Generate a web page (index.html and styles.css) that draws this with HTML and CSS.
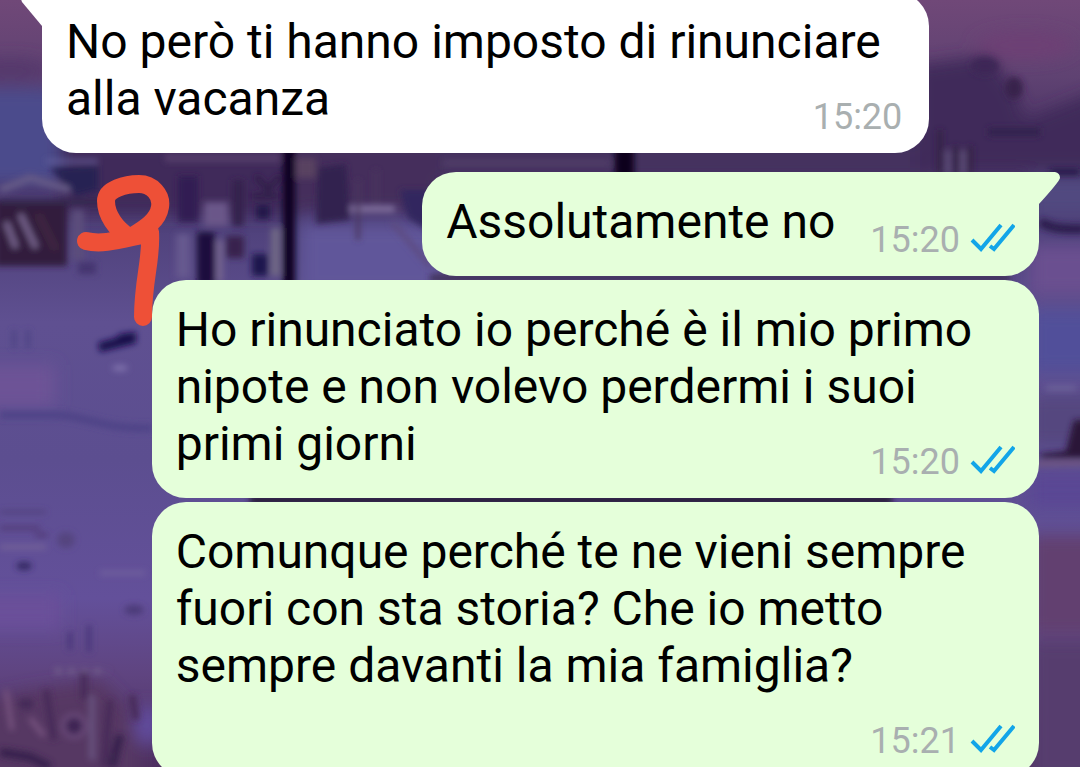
FILE: index.html
```html
<!DOCTYPE html>
<html lang="it">
<head>
<meta charset="utf-8">
<meta name="viewport" content="width=device-width, initial-scale=1">
<title>Chat</title>
<link rel="stylesheet" href="styles.css">
</head>
<body>
<svg class="wallpaper" viewBox="0 0 1080 767" preserveAspectRatio="xMidYMid slice" aria-hidden="true">
  <defs>
    <linearGradient id="sky" x1="0" y1="0" x2="0" y2="1">
      <stop offset="0" stop-color="#704878"/>
      <stop offset="0.1" stop-color="#5f4272"/>
      <stop offset="0.2" stop-color="#463062"/>
      <stop offset="0.3" stop-color="#50427c"/>
      <stop offset="0.42" stop-color="#5f5091"/>
      <stop offset="0.6" stop-color="#5c4e90"/>
      <stop offset="0.78" stop-color="#63509a"/>
      <stop offset="0.88" stop-color="#5f4480"/>
      <stop offset="1" stop-color="#4d3060"/>
    </linearGradient>
    <filter id="soft" x="-20%" y="-20%" width="140%" height="140%"><feGaussianBlur stdDeviation="8"/></filter>
    <filter id="edge" x="-20%" y="-20%" width="140%" height="140%"><feGaussianBlur stdDeviation="3"/></filter>
  </defs>
  <rect width="1080" height="767" fill="url(#sky)"/>
  <g filter="url(#soft)">
    <rect x="-20" y="88" width="80" height="96" fill="#4b4b8c"/>
    <ellipse cx="10" cy="70" rx="40" ry="12" fill="#54386c"/>
    <rect x="60" y="140" width="240" height="75" fill="#3f2b5a"/>
    <rect x="290" y="140" width="150" height="70" fill="#452f5c"/>
    <rect x="300" y="224" width="140" height="70" fill="#61579a"/>
    <rect x="440" y="140" width="500" height="40" fill="#44305f"/>
    <path d="M915 65 L990 55 L1015 90 L1025 120 L1100 90 V170 H915Z" fill="#412c5a"/>
    <ellipse cx="1025" cy="45" rx="50" ry="14" fill="#6d4074"/>
    <rect x="1030" y="176" width="70" height="40" fill="#514a80"/>
    <rect x="1030" y="245" width="70" height="50" fill="#6a5090"/>
    <rect x="1030" y="310" width="70" height="62" fill="#51509a"/>
    <rect x="1030" y="395" width="70" height="50" fill="#55477f"/>
    <rect x="1030" y="473" width="70" height="34" fill="#5a4794"/>
    <rect x="1030" y="535" width="70" height="100" fill="#62406f"/>
    <rect x="1030" y="640" width="70" height="140" fill="#563c6e"/>
    <rect x="-20" y="365" width="75" height="42" fill="#6d5296"/>
    <rect x="-20" y="595" width="80" height="34" fill="#6b509a"/>
    <path d="M-20 700 L30 690 L100 680 L140 720 V790 H-20Z" fill="#573764"/>
    <ellipse cx="148" cy="725" rx="14" ry="20" fill="#604b9c"/>
  </g>
  <g filter="url(#edge)">
    <path d="M50 168 L98 166 V190 L76 196 L56 174Z" fill="#252052"/>
    <path d="M46 161H98" stroke="#6764a0" stroke-width="3"/>
    <path d="M0 190 L30 178 L70 190" stroke="#665b87" stroke-width="7" fill="none"/>
    <rect x="-5" y="201" width="72" height="65" fill="#301d3e"/>
    <path d="M0 202H110" stroke="#32264c" stroke-width="5"/>
    <path d="M6 222 L16 248 M20 214 L36 248" stroke="#75628b" stroke-width="6"/>
    <path d="M38 214 L56 250" stroke="#412640" stroke-width="7"/>
    <rect x="72" y="210" width="12" height="50" fill="#5c4e7b"/>
    <rect x="78" y="262" width="18" height="12" fill="#453670"/>
    <path d="M165 158H280" stroke="#553d6b" stroke-width="8"/>
    <rect x="178" y="176" width="20" height="46" fill="#301d52"/>
    <rect x="204" y="202" width="24" height="24" fill="#6a5789"/>
    <rect x="232" y="180" width="12" height="46" fill="#35214e"/>
    <rect x="256" y="205" width="14" height="14" fill="#24134a"/>
    <path d="M256 176l12 14 12-14M252 196h26" stroke="#2f1d46" stroke-width="5" fill="none"/>
    <rect x="197" y="232" width="18" height="54" fill="#1a0b3e"/>
    <rect x="216" y="240" width="7" height="42" fill="#75658f"/>
    <rect x="226" y="236" width="18" height="22" fill="#38234e"/>
    <rect x="252" y="254" width="16" height="22" fill="#1d174e"/>
    <rect x="271" y="228" width="9" height="48" fill="#6f6884"/>
    <rect x="176" y="234" width="14" height="44" fill="#66598f"/>
    <rect x="283" y="140" width="12" height="150" fill="#0d0524"/>
    <rect x="296" y="158" width="20" height="20" fill="#594360"/>
    <path d="M318 168 L346 164 L350 220 L316 224Z" fill="#33204f"/>
    <path d="M350 209H395" stroke="#80709d" stroke-width="7"/>
    <path d="M358 180V240 M376 170V204" stroke="#49345f" stroke-width="4"/>
    <path d="M400 190 L430 190 V232 L408 218Z" fill="#33285e"/>
    <path d="M392 222 L430 266" stroke="#5d4b80" stroke-width="5"/>
    <rect x="615" y="140" width="19" height="40" fill="#0d031b"/>
    <path d="M443 163H610" stroke="#53406b" stroke-width="5"/>
    <path d="M940 130V174 M956 146V174 M970 146V174" stroke="#302143" stroke-width="5"/>
    <path d="M963 150V174 M948 150V174" stroke="#665a82" stroke-width="4"/>
    <ellipse cx="985" cy="66" rx="14" ry="9" fill="#3c2856"/>
    <ellipse cx="1014" cy="88" rx="9" ry="11" fill="#39214b"/>
    <path d="M988 132H1040" stroke="#33204e" stroke-width="8"/>
    <path d="M1050 172H1080" stroke="#221945" stroke-width="6"/>
    <path d="M1040 222 C1055 230 1065 229 1085 229" stroke="#2b1d4b" stroke-width="9" fill="none"/>
    <path d="M1046 388H1076" stroke="#71679d" stroke-width="4"/>
    <path d="M1040 454 L1066 451 L1074 420 H1090 V458 H1040Z" fill="#2b1238"/>
    <path d="M1036 464 L1085 463" stroke="#72567e" stroke-width="5"/>
    <path d="M430 278H1010" stroke="#3b2a50" stroke-width="6"/>
    <path d="M250 500H892" stroke="#1c1124" stroke-width="7"/>
    <path d="M98 343 L116 338 L120 334 L136 332 V343 L120 347 L100 352Z" fill="#150a4a"/>
    <ellipse cx="120" cy="368" rx="8" ry="3" fill="#8173ad"/>
    <path d="M14 330V348 M28 330V348" stroke="#4c4383" stroke-width="4"/>
    <path d="M0 415 H60 C90 418 110 430 152 428" stroke="#4d4386" stroke-width="7" fill="none"/>
    <path d="M0 512H46" stroke="#4e3f78" stroke-width="3"/>
    <path d="M0 547H46" stroke="#776598" stroke-width="4"/>
    <path d="M35 535H48 M0 528H40" stroke="#513975" stroke-width="4"/>
    <ellipse cx="24" cy="566" rx="8" ry="4" fill="#302561"/>
    <ellipse cx="66" cy="540" rx="9" ry="8" fill="#54457f"/>
    <ellipse cx="134" cy="610" rx="10" ry="5" fill="#4b3b78"/>
    <path d="M100 573H145" stroke="#72629e" stroke-width="4"/>
    <path d="M89 625V652 M70 632V650" stroke="#49377b" stroke-width="5"/>
    <path d="M55 671H108" stroke="#75628c" stroke-width="5" stroke-dasharray="7 6"/>
    <path d="M46 690 L54 740 M84 672V700 M110 700 L104 767 M132 695L136 720" stroke="#472a58" stroke-width="7"/>
    <path d="M92 695V760" stroke="#68537f" stroke-width="6"/>
    <ellipse cx="26" cy="704" rx="8" ry="6" fill="#452958"/>
    <circle cx="74" cy="726" r="11" fill="#412555" stroke="#6c4c7c" stroke-width="4"/>
    <path d="M0 752 L30 757 L50 767 M120 735L112 767" stroke="#38204d" stroke-width="9" fill="none"/>
    <path d="M6 690 L12 730 M30 718L44 736" stroke="#77537f" stroke-width="5"/>
  </g>
</svg>

<main class="chat">
  <article class="bubble bubble-in">
    <svg class="tail tail-in" viewBox="0 0 22 34" aria-hidden="true"><path fill="#fff" d="M5 0 H22 V34 H21 L1 10 Q-3 0 5 0Z"/></svg>
    <p class="text">No però ti hanno imposto di rinunciare alla vacanza <span class="meta"><time>15:20</time></span></p>
  </article>

  <article class="bubble bubble-out bubble-first">
    <svg class="tail tail-out" viewBox="0 0 22 34" aria-hidden="true"><path fill="#e5ffda" d="M0 0 H17 Q22 1 22 6 Q21 10 1 32 V34 H0Z"/></svg>
    <p class="text">Assolutamente no<span class="meta"><time>15:20</time><svg class="ticks" viewBox="0 0 45 30" role="img" aria-label="Letto"><path d="M2 17 L11 26 L31 2 M20 23 L24 26 L44 2"/></svg></span></p>
  </article>

  <article class="bubble bubble-out">
    <p class="text">Ho rinunciato io perché è il mio primo nipote e non volevo perdermi i suoi primi giorni <span class="meta"><time>15:20</time><svg class="ticks" viewBox="0 0 45 30" role="img" aria-label="Letto"><path d="M2 17 L11 26 L31 2 M20 23 L24 26 L44 2"/></svg></span></p>
  </article>

  <article class="bubble bubble-out">
    <p class="text">Comunque perché te ne vieni sempre fuori con sta storia? Che io metto sempre davanti la mia famiglia? <span class="meta"><time>15:21</time><svg class="ticks" viewBox="0 0 45 30" role="img" aria-label="Letto"><path d="M2 17 L11 26 L31 2 M20 23 L24 26 L44 2"/></svg></span></p>
  </article>
</main>

<svg class="scribble" viewBox="0 0 94 152" aria-hidden="true">
  <path d="M10 66 C26 70 42 65 70 59 M53 62 C40 54 30 40 30 26 C30 14 50 9 63 9 C76 9 86 20 84 32 C82 46 68 54 55 62 M74 57 C76 83 67 105 67 142"/>
</svg>
</body>
</html>
```

FILE: styles.css
```css
* {
  box-sizing: border-box;
}

body {
  margin: 0;
  height: 100vh;
  overflow: hidden;
  position: relative;
  background: #5c4e90;
  color: #000;
  font-family: Roboto, "Liberation Sans", sans-serif;
}

.wallpaper {
  position: absolute;
  inset: 0;
  width: 100%;
  height: 100%;
}

/* The list is scrolled, so the first bubble starts above the window. */
.chat {
  position: relative;
  display: flex;
  flex-direction: column;
  gap: 4px;
  margin-top: -8px;
  padding: 0 41px 0 42px;
}

.bubble {
  position: relative;
  max-width: 89%;
  padding: 21px 24px 14px;
  border-radius: 34px;
}

.bubble-in {
  align-self: flex-start;
  background: #fff;
  border-top-left-radius: 0;
}

.bubble-out {
  align-self: flex-end;
  background: #e5ffda;
}

.bubble-first {
  margin-top: 15px;
  border-top-right-radius: 0;
}

.text {
  display: flow-root;
  margin: 0;
  font-size: 48px;
  line-height: 57px;
}

/* Sits beside the last line, or drops below it when there is no room. */
.meta {
  float: right;
  display: flex;
  align-items: center;
  gap: 10px;
  height: 44px;
  margin: 25px 0 0 35px;
  color: #a9afb0;
  font-size: 36px;
  line-height: 44px;
}

.bubble-in .meta {
  margin-right: 3px;
}

.ticks {
  width: 45px;
  height: 30px;
  margin-bottom: 4px;
  fill: none;
  stroke: #12a5e8;
  stroke-width: 4;
}

.tail {
  position: absolute;
  top: 0;
  width: 22px;
  height: 34px;
}

.tail-in {
  right: 100%;
  margin-right: -1px;
}

.tail-out {
  left: 100%;
  margin-left: -1px;
}

.scribble {
  position: absolute;
  left: 76px;
  top: 175px;
  width: 94px;
  height: 152px;
  fill: none;
  stroke: #ee5037;
  stroke-width: 18;
  stroke-linecap: round;
  stroke-linejoin: round;
}
```
